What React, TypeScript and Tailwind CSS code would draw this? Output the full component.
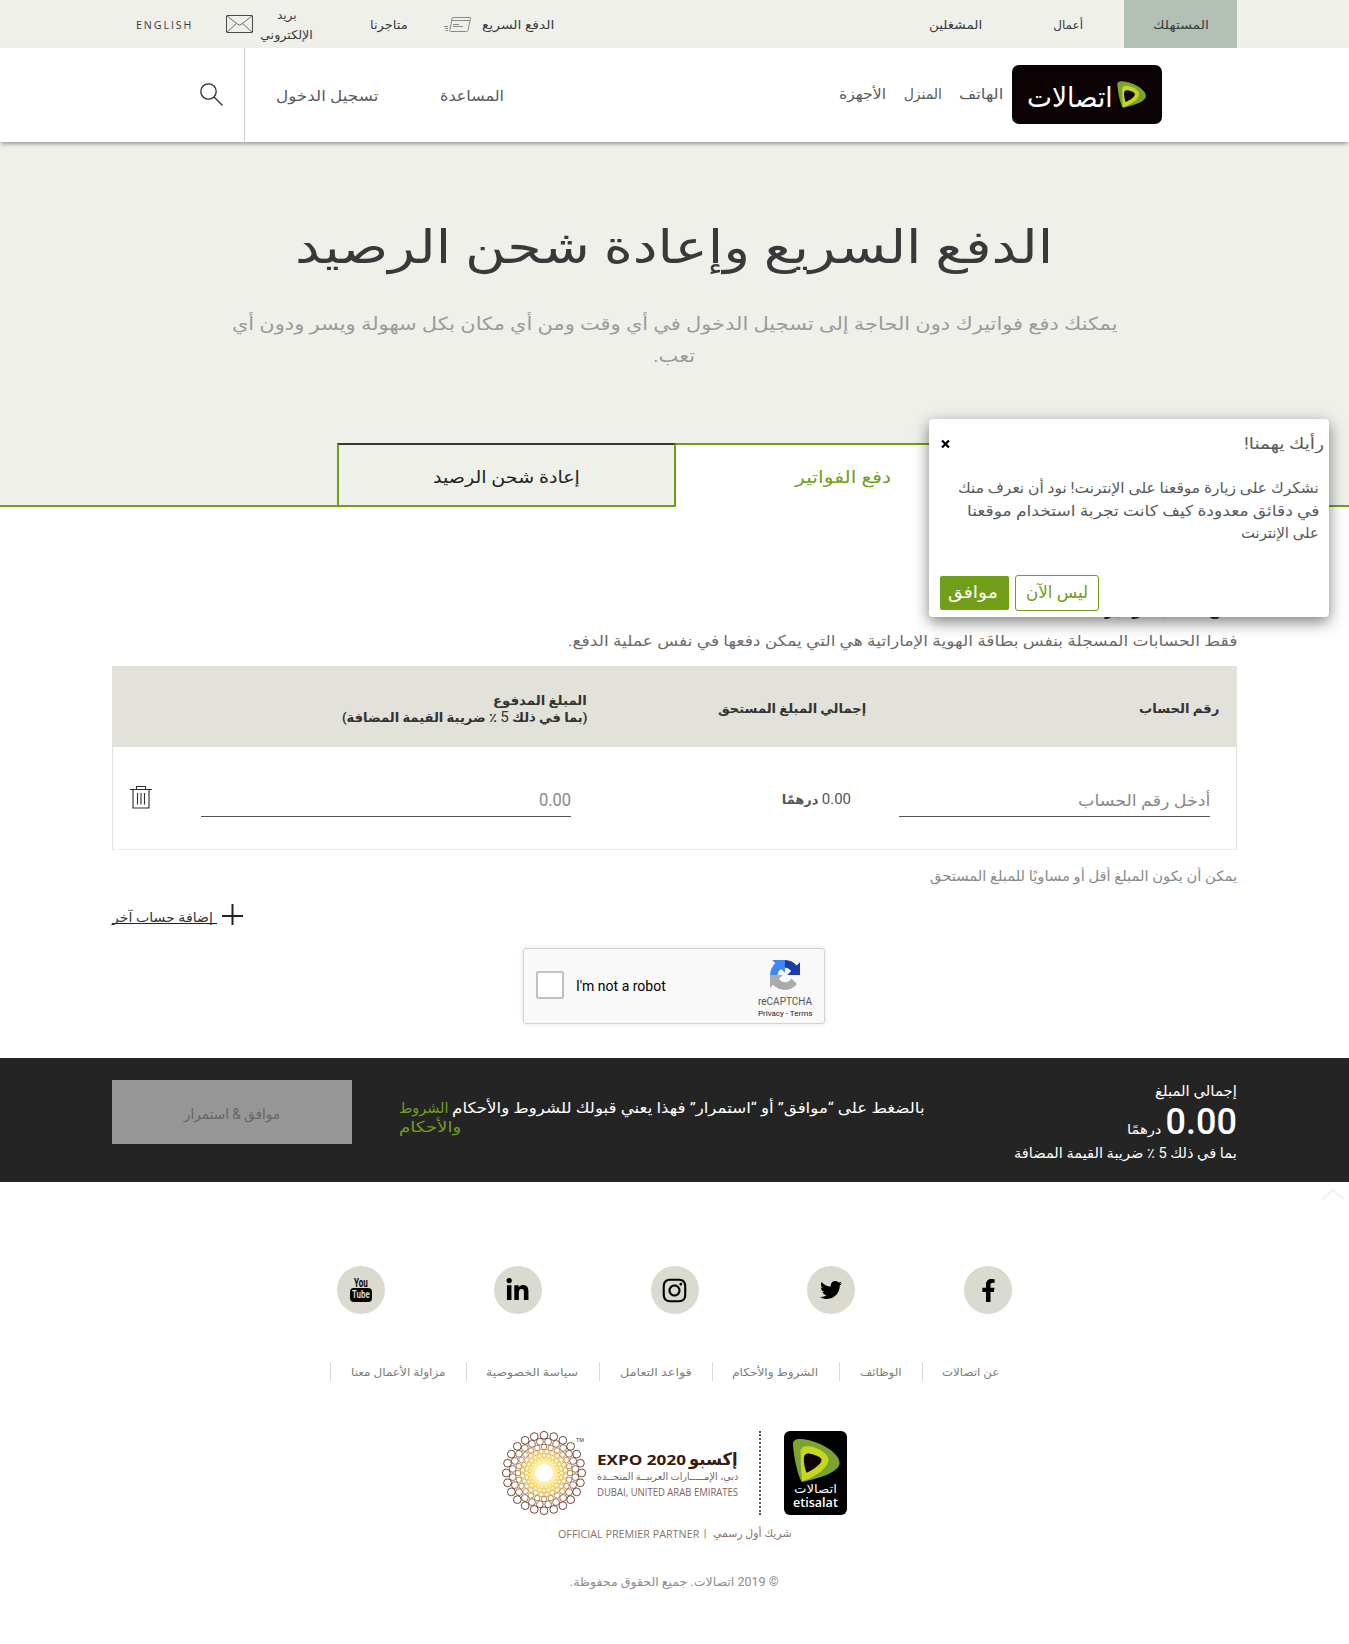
import { useLayoutEffect, useRef, type ReactNode } from "react";
import { FaFacebookF, FaInstagram, FaLinkedinIn, FaTwitter } from "react-icons/fa";

/** Single line of text, condensed or widened to fill the width given in className. */
function Fit({ className = "", ltr = false, children }: { className?: string; ltr?: boolean; children: ReactNode }) {
  const outer = useRef<HTMLSpanElement>(null);
  const inner = useRef<HTMLSpanElement>(null);
  useLayoutEffect(() => {
    const o = outer.current;
    const i = inner.current;
    if (o && i && i.offsetWidth > 0) {
      i.style.transform = `scaleX(${o.offsetWidth / i.offsetWidth})`;
    }
  }, []);
  return (
    <span ref={outer} dir={ltr ? "ltr" : "rtl"} className={`block shrink-0 whitespace-nowrap ${className}`}>
      <span ref={inner} className={`inline-block ${ltr ? "origin-left" : "origin-right"}`}>
        {children}
      </span>
    </span>
  );
}

function Leaf({ className }: { className: string }) {
  return (
    <svg viewBox="0 0 144 131" className={className}>
      <path fill="#7aa32f" d="M2 20C0 5 8 0 25 0c50 2 119 40 119 73-2 27-54 45-116 58C15 105 5 60 2 20Z" />
      <path fill="#c6d71f" d="M25 42c-1-16 9-21 25-20 30 3 60 23 60 42-2 26-40 51-80 65-4-29-4-59-5-87Z" />
      <path fill="#0b0303" d="M35 58c1-12 9-15 19-13 16 3 35 11 35 19-1 14-24 28-46 39-5-13-9-31-8-45Z" />
    </svg>
  );
}

function TopBar() {
  return (
    <div className="h-12 bg-[#eff0ea]">
      <div className="mx-auto flex h-12 w-[1125px] items-start text-xs leading-[50px] text-[#3a3a3c]">
        <div className="flex h-12 w-[113px] shrink-0 justify-center bg-[#b3c0b6]">
          <Fit className="w-[56px]">المستهلك</Fit>
        </div>
        <Fit className="ms-[41px] w-[30px]">أعمال</Fit>
        <Fit className="ms-[71px] w-[53px]">المشغلين</Fit>
        <Fit className="ms-[375px] w-[72px]">الدفع السريع</Fit>
        <svg viewBox="0 0 27 15" className="ms-[11px] mt-[17px] h-[15px] w-[27px] shrink-0" fill="none" stroke="#8a8a86" strokeWidth="1">
          <path d="M9 .5h17c.4 0 .6.3.5.7L24 13c-.1.9-.6 1.5-1.300 1.500H6.500c-.6 0-.8-.5-.7-1L8 1.500c.1-.6.5-1 1-1ZM7.500 3.500H26M9 7.500h6M9 9.500h10M0 9.500h4M1 11.500h3M1.500 13.500h2.500" />
        </svg>
        <Fit className="ms-[36px] w-[38px]">متاجرنا</Fit>
        <div className="ms-[57px] mt-[5px] flex w-[53px] shrink-0 flex-col items-center leading-[20px]">
          <Fit className="w-[20px]">بريد</Fit>
          <Fit className="w-[53px]">الإلكتروني</Fit>
        </div>
        <svg viewBox="0 0 27 18" className="ms-[7px] mt-[15px] h-[18px] w-[27px] shrink-0" fill="none" stroke="#4a4a4a">
          <rect x=".5" y=".5" width="26" height="17" rx=".5" />
          <path strokeWidth=".8" d="m1 1 11 8.500q1.500 1 3 0L26 1M1 17l9.500-8.500M26 17l-9.500-8.500" />
        </svg>
        <Fit ltr className="mr-[33px] w-[57px] font-['Open_Sans'] text-[11px] tracking-[2px]">ENGLISH</Fit>
      </div>
    </div>
  );
}

function Header() {
  return (
    <header className="relative h-[94px] bg-white shadow-[0_3px_4px_-1px_rgba(0,0,0,0.35)]">
      <div className="mx-auto flex h-full w-[1125px] items-start text-sm leading-[92px] text-[#5a5a5c]">
        <div className="ms-[75px] mt-[17px] flex h-[59px] w-[150px] shrink-0 items-start rounded-[7px] bg-[#0b0303]">
          <Leaf className="ms-4 mt-4 h-[27px] w-[29px] shrink-0" />
          <Fit className="ms-1 w-[86px] text-[28px] leading-[65px] text-white">اتصالات</Fit>
        </div>
        <Fit className="ms-[9px] w-[44px]">الهاتف</Fit>
        <Fit className="ms-[17px] w-[38px]">المنزل</Fit>
        <Fit className="ms-[18px] w-[47px]">الأجهزة</Fit>
        <Fit className="ms-[335px] w-[64px] text-[15px] leading-[96px]">المساعدة</Fit>
        <Fit className="ms-[62px] w-[102px] text-[15px] leading-[96px]">تسجيل الدخول</Fit>
        <div className="ms-[31px] h-full w-px shrink-0 bg-[#cfcfcf]" />
        <svg viewBox="0 0 23 23" className="ms-[21px] mt-[35px] h-[23px] w-[23px] shrink-0" fill="none" stroke="#2c2c2c" strokeWidth="1.300">
          <circle cx="8.500" cy="8.500" r="7.700" />
          <path d="m14 14 8.500 8.500" />
        </svg>
      </div>
    </header>
  );
}

function Hero() {
  return (
    <section className="flex h-[365px] flex-col items-center bg-[#eff0ea] pt-[75px]">
      <h1 className="text-[46px] leading-[60px] text-[#38393b]">
        <Fit className="w-[758px]">الدفع السريع وإعادة شحن الرصيد</Fit>
      </h1>
      <div className="mt-[31px] flex flex-col items-center text-lg leading-[32px] text-[#9b9b9b]">
        <Fit className="w-[885px]">
          يمكنك دفع فواتيرك دون الحاجة إلى تسجيل الدخول في أي وقت ومن أي مكان بكل سهولة ويسر ودون أي
        </Fit>
        <Fit className="w-[42px]">تعب.</Fit>
      </div>
      <div className="mt-[71px] flex h-[64px] w-full text-[17px] leading-[64px]">
        <div className="flex-1 border-b-2 border-[#719e19]" />
        <div className="flex w-[337px] justify-center border-t-2 border-[#719e19] bg-white text-[#719e19]">
          <Fit className="ms-[2px] w-[96px]">دفع الفواتير</Fit>
        </div>
        <div className="flex w-[339px] justify-center border-2 border-[#719e19] border-t-[#38393b] text-[#222]">
          <Fit className="w-[147px]">إعادة شحن الرصيد</Fit>
        </div>
        <div className="w-[337px] border-b-2 border-[#719e19]" />
      </div>
    </section>
  );
}

function AccountTable() {
  return (
    <div className="mt-[13px]">
      <div className="flex h-[81px] items-start bg-[#e2e1da] text-[13px] leading-[85px] font-bold text-[#333]">
        <Fit className="ms-[18px] w-[80px]">رقم الحساب</Fit>
        <Fit className="ms-[273px] w-[148px]">إجمالي المبلغ المستحق</Fit>
        <div className="ms-[131px] mt-[26px] leading-[17px]">
          <Fit className="w-[94px]">المبلغ المدفوع</Fit>
          <Fit className="w-[245px]">
            (بما في ذلك <span className="text-[15px] leading-[15px] font-normal">5</span> ٪ ضريبة القيمة المضافة)
          </Fit>
        </div>
      </div>
      <div className="flex h-[103px] items-start border border-t-0 border-[#e2e1da] border-b-[#eeeeec] leading-[22px]">
        <div className="ms-[26px] mt-[42px] h-[28px] w-[311px] shrink-0 border-b border-[#555] text-base text-[#8a8a8a]">
          <Fit className="w-[132px]">أدخل رقم الحساب</Fit>
        </div>
        <Fit className="ms-[48px] mt-[42px] w-[69px] text-[13px] text-[#555]">
          <span className="text-[15px] leading-[15px]">0.00</span> <span className="font-bold">درهمًا</span>
        </Fit>
        <div className="ms-[211px] mt-[42px] h-[28px] w-[370px] shrink-0 border-b border-[#555] text-lg leading-[21px] text-[#8a8a8a]">
          <Fit className="w-[32px]">0.00</Fit>
        </div>
        <svg viewBox="0 0 22 23" className="ms-[49px] mt-[39px] h-[23px] w-[22px] shrink-0" fill="none" stroke="#2f2f2f" strokeWidth="1.100">
          <path d="M0 3.500h22M6.500 3.500v-3h9v3M3 3.500v18.500h16V3.500M7.500 7v11.500M11 7v11.500M14.500 7v11.500" />
        </svg>
      </div>
    </div>
  );
}

function Captcha() {
  return (
    <div dir="ltr" className="mt-[23px] mr-[412px] flex h-[76px] w-[302px] items-start rounded-[3px] border border-[#d3d3d3] bg-[#f9f9f9] font-['Roboto'] shadow-[0_0_4px_1px_rgba(0,0,0,0.08)]">
      <div className="mt-[22px] ml-3 h-7 w-7 rounded-[2px] border-2 border-[#c1c1c1] bg-white" />
      <Fit ltr className="ml-[12px] w-[90px] text-sm leading-[74px] text-black">I'm not a robot</Fit>
      <div className="ml-[91px] flex w-[56px] flex-col items-center text-[#555]">
        <svg viewBox="0 0 64 64" className="mt-[11px] h-[30px] w-[30px]">
          <path fill="#1c3aa9" d="M64 31.955l-.033-1.370V4.687l-7.160 7.160C50.948 4.674 42.033.093 32.050.093c-10.400 0-19.622 4.960-25.458 12.640l11.736 11.860a15.550 15.550 0 0 1 4.754-5.334c2.050-1.600 4.952-2.906 8.968-2.906.485 0 .86.057 1.135.163 4.976.393 9.288 3.140 11.828 7.124l-8.307 8.307L64 31.953" />
          <path fill="#4285f4" d="M31.862.094l-1.370.033H4.594l7.160 7.160C4.580 13.147 0 22.060 0 32.046c0 10.400 4.960 19.622 12.640 25.458L24.500 45.768a15.550 15.550 0 0 1-5.334-4.754c-1.600-2.050-2.906-4.952-2.906-8.968 0-.485.057-.86.163-1.135.393-4.976 3.140-9.288 7.124-11.828l8.307 8.307L31.860.095" />
          <path fill="#ababab" d="M.001 32.045l.033 1.370v25.898l7.160-7.160c5.860 7.173 14.774 11.754 24.760 11.754 10.400 0 19.622-4.960 25.458-12.640l-11.736-11.860a15.550 15.550 0 0 1-4.754 5.334c-2.050 1.600-4.952 2.906-8.968 2.906-.485 0-.86-.057-1.135-.163-4.976-.393-9.288-3.140-11.828-7.124l8.307-8.307c-10.522.04-22.400.066-27.295-.005" />
        </svg>
        <Fit ltr className="mt-[6px] w-[54px] text-[10px] leading-[12px]">reCAPTCHA</Fit>
        <Fit ltr className="w-[54px] text-[8px] leading-[11px] text-[#222]">Privacy - Terms</Fit>
      </div>
    </div>
  );
}

function BillForm() {
  return (
    <section className="mx-auto h-[551px] w-[1125px] pt-[85px]">
      <h2 className="text-xl leading-[30px] font-bold text-[#333]">
        <Fit className="w-[132px]">دفع حساب فواتير</Fit>
      </h2>
      <Fit className="mt-[7px] w-[669px] text-[15px] leading-[24px] text-[#6b6b6b]">
        فقط الحسابات المسجلة بنفس بطاقة الهوية الإماراتية هي التي يمكن دفعها في نفس عملية الدفع.
      </Fit>
      <AccountTable />
      <Fit className="mt-[14px] w-[307px] text-sm leading-[24px] text-[#8a8a8a]">
        يمكن أن يكون المبلغ أقل أو مساويًا للمبلغ المستحق
      </Fit>
      <div className="mt-[16px] flex h-[21px] items-start justify-end">
        <svg viewBox="0 0 21 21" className="h-[21px] w-[21px]" stroke="#222" strokeWidth="2">
          <path d="M10.500 0v21M0 12h21" />
        </svg>
        <div className="ms-[5px] flex h-[20px] w-[105px] border-b border-[#222] ps-1 text-[13px] leading-[28px] text-[#333]">
          <Fit className="w-[101px]">إضافة حساب آخر</Fit>
        </div>
      </div>
      <Captcha />
    </section>
  );
}

function TotalBar() {
  return (
    <section className="h-[124px] bg-[#242424] text-white">
      <div className="mx-auto flex w-[1125px] items-start">
        <div className="mt-[24px] w-[223px] shrink-0 text-sm">
          <Fit className="w-[82px] leading-[18px]">إجمالي المبلغ</Fit>
          <div className="mt-[5px] flex h-[34px] items-baseline">
            <Fit className="w-[71px] text-[36px] leading-[34px] font-medium">0.00</Fit>
            <Fit className="ms-[5px] w-[34px] text-[13px] leading-[18px]">درهمًا</Fit>
          </div>
          <Fit className="mt-1 w-[223px] leading-[20px]">بما في ذلك 5 ٪ ضريبة القيمة المضافة</Fit>
        </div>
        <div className="ms-[89px] mt-[41px] flex w-[526px] shrink-0 flex-col items-end text-[15px] leading-[19px]">
          <div className="flex">
            <Fit className="w-[473px]">بالضغط على “موافق” أو “استمرار” فهذا يعني قبولك للشروط والأحكام</Fit>
            <Fit className="ms-[3px] w-[50px] text-[#719e19]">الشروط</Fit>
          </div>
          <Fit className="w-[62px] text-[#719e19]">والأحكام</Fit>
        </div>
        <button className="ms-[47px] mt-[22px] flex h-[64px] w-[240px] shrink-0 justify-center bg-[#969696] text-sm leading-[68px] text-[#666]">
          <Fit className="w-[96px]">موافق &amp; استمرار</Fit>
        </button>
      </div>
    </section>
  );
}

const rings = [
  { radius: 14, size: 1.5, color: "#f7cf2e" },
  { radius: 17.5, size: 1.9, color: "#f3c22c" },
  { radius: 21.5, size: 2.3, color: "#e0a634" },
  { radius: 26, size: 2.7, color: "#b98040" },
  { radius: 31.5, size: 3.4, color: "#8a5a42" },
  { radius: 37.7, size: 3.9, color: "#5e3222" },
];

function ExpoFlower() {
  return (
    <svg viewBox="0 0 84 84" className="h-[84px] w-[84px] shrink-0" fill="none">
      <circle cx="42" cy="42" r="10.500" stroke="#fdeea8" strokeWidth="3" />
      {rings.map(({ radius, size, color }, ring) =>
        Array.from({ length: 24 }, (_, k) => {
          const angle = ((k + ((ring + 1) % 2) / 2) / 24) * Math.PI * 2;
          return (
            <circle
              key={`${ring}-${k}`}
              cx={42 + Math.sin(angle) * radius}
              cy={42 - Math.cos(angle) * radius}
              r={size}
              stroke={color}
              strokeWidth=".9"
            />
          );
        }),
      )}
    </svg>
  );
}

const circle = "flex h-12 w-12 items-center justify-center rounded-full bg-[#dadad0] text-black";

function FooterLink({ children }: { children: ReactNode }) {
  return <li className="flex border-l border-[#d9d9d9] px-[20px]">{children}</li>;
}

function Footer() {
  return (
    <footer className="relative flex h-[462px] flex-col items-center bg-white">
      <svg viewBox="0 0 26 14" className="absolute top-[5px] left-[1320px] h-[14px] w-[26px]" fill="none" stroke="#f5f5f5" strokeWidth="3">
        <path d="m2 12 11-9 11 9" />
      </svg>
      <div className="mt-[84px] flex w-[675px] justify-between">
        <span className={circle}><FaFacebookF size={23} /></span>
        <span className={circle}><FaTwitter size={22} /></span>
        <span className={circle}><FaInstagram size={27} /></span>
        <span className={circle}><FaLinkedinIn size={25} /></span>
        <span className={`${circle} flex-col font-['Roboto'] font-bold`}>
          <Fit ltr className="w-[14px] text-[12px] leading-[10px]">You</Fit>
          <span className="flex h-[14px] w-[22px] justify-center rounded-[4px] bg-black text-[#dadad0]">
            <Fit ltr className="w-[18px] text-[11px] leading-[14px]">Tube</Fit>
          </span>
        </span>
      </div>
      <ul className="mt-[48px] flex h-[19px] text-[11px] leading-[21px] text-[#7c7c7c]">
        <FooterLink><Fit className="w-[57px]">عن اتصالات</Fit></FooterLink>
        <FooterLink><Fit className="w-[42px]">الوظائف</Fit></FooterLink>
        <FooterLink><Fit className="w-[86px]">الشروط والأحكام</Fit></FooterLink>
        <FooterLink><Fit className="w-[72px]">قواعد التعامل</Fit></FooterLink>
        <FooterLink><Fit className="w-[92px]">سياسة الخصوصية</Fit></FooterLink>
        <FooterLink><Fit className="w-[95px]">مزاولة الأعمال معنا</Fit></FooterLink>
      </ul>
      <div className="mt-[50px] flex h-[84px]">
        <div className="flex h-[84px] w-[63px] flex-col items-center rounded-[6px] bg-black pt-2 text-white">
          <Leaf className="h-[43px] w-[48px] shrink-0" />
          <Fit className="w-[43px] text-[12px] leading-[14px]">اتصالات</Fit>
          <Fit ltr className="w-[45px] font-['Open_Sans'] text-[12px] leading-[14px] font-semibold">etisalat</Fit>
        </div>
        <div className="ms-[23px] w-0 border-l-2 border-dotted border-[#6a5044]" />
        <div className="ms-[21px] w-[141px] pt-[17px] text-[#7d6358]">
          <div className="flex h-[22px] text-[#3b1a0c]">
            <Fit className="w-[49px] text-[17px] leading-[22px] font-bold">إكسبو</Fit>
            <Fit ltr className="mr-[3px] w-[89px] font-['Open_Sans'] text-[15px] leading-[22px] font-bold">EXPO 2020</Fit>
          </div>
          <Fit className="w-[141px] text-[10px] leading-[13px]">دبي، الإمـــــارات العربيــة المتحــدة</Fit>
          <Fit ltr className="mt-px w-[141px] font-['Open_Sans'] text-[10px] leading-[16px]">DUBAI, UNITED ARAB EMIRATES</Fit>
        </div>
        <div className="relative ms-[11px] h-[84px] w-[84px]">
          <ExpoFlower />
          <Fit ltr className="absolute top-[5px] left-[74px] w-[8px] text-[6px] leading-[7px] text-[#5e3222]">TM</Fit>
        </div>
      </div>
      <div className="mt-[10px] flex text-[11px] leading-[18px] text-[#8a7268]">
        <Fit className="w-[79px]">شريك أول رسمي</Fit>
        <Fit className="ms-[6px] w-[3px]">|</Fit>
        <Fit ltr className="mr-[5px] w-[141px] font-['Open_Sans'] text-[10px]">OFFICIAL PREMIER PARTNER</Fit>
      </div>
      <Fit className="mt-[29px] w-[209px] text-xs leading-[20px] text-[#8c8c8c]">© 2019 اتصالات. جميع الحقوق محفوظة.</Fit>
    </footer>
  );
}

function FeedbackPopup() {
  return (
    <aside className="absolute top-[419px] left-[929px] h-[198px] w-[400px] rounded-[4px] bg-white text-[#58595b] shadow-[0_5px_15px_rgba(0,0,0,0.5)]">
      <div className="flex h-[49px] items-start justify-between ps-[5px] pe-3">
        <Fit className="w-[80px] text-base leading-[49px]">رأيك يهمنا!</Fit>
        <svg viewBox="0 0 9 8" className="mt-[21px] h-[8px] w-[9px]" stroke="#000" strokeWidth="2.200">
          <path d="m1 .5 7 7M8 .5l-7 7" />
        </svg>
      </div>
      <div className="mt-[9px] ps-[10px] text-[15px] leading-[22.5px]">
        <Fit className="w-[361px]">نشكرك على زيارة موقعنا على الإنترنت! نود أن نعرف منك</Fit>
        <Fit className="w-[352px]">في دقائق معدودة كيف كانت تجربة استخدام موقعنا</Fit>
        <Fit className="w-[78px]">على الإنترنت</Fit>
      </div>
      <div className="mt-[30px] flex items-center justify-end gap-[6px] pe-[11px] text-[17px]">
        <button className="flex h-9 w-[84px] justify-center rounded-[3px] border border-[#719e19] leading-[33px] text-[#719e19]">
          <Fit className="w-[62px]">ليس الآن</Fit>
        </button>
        <button className="flex h-[34px] w-[69px] justify-center rounded-[2px] bg-[#719e19] pl-[2px] leading-[33px] text-white">
          <Fit className="w-[50px]">موافق</Fit>
        </button>
      </div>
    </aside>
  );
}

export default function App() {
  return (
    <div dir="rtl" className="relative min-h-[1644px] w-[1349px] overflow-hidden bg-white font-['Roboto','DejaVu_Sans',sans-serif]">
      <TopBar />
      <Header />
      <Hero />
      <BillForm />
      <TotalBar />
      <Footer />
      <FeedbackPopup />
    </div>
  );
}
